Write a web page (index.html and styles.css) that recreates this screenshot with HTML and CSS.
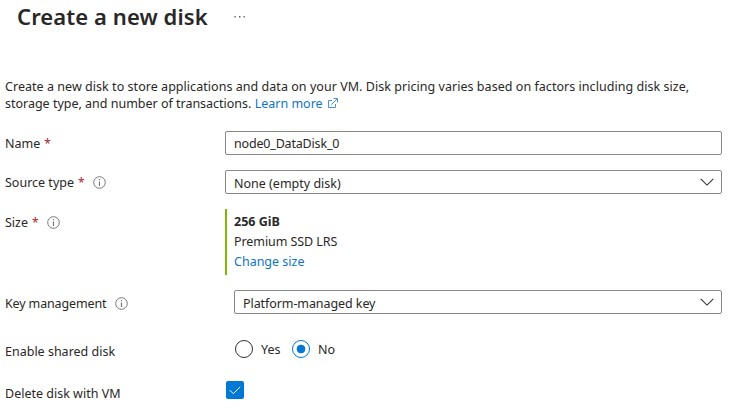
FILE: index.html
```html
<!DOCTYPE html>
<html lang="en">
<head>
<meta charset="utf-8">
<title>Create a new disk</title>
<link rel="stylesheet" href="styles.css">
</head>
<body>
<svg class="defs" width="0" height="0" aria-hidden="true">
  <symbol id="info" viewBox="0 0 13 13"><circle cx="6.5" cy="6.5" r="5.8" fill="none" stroke="#777" stroke-width="1"/><path d="M6.5 5.5V10M6.5 3V4.3" stroke="#777" stroke-width="1.2"/></symbol>
  <symbol id="chevron" viewBox="0 0 14 8"><path d="M.7 .9L7 7.1L13.3 .9" fill="none" stroke="#323130" stroke-width="1.1"/></symbol>
</svg>
<header class="header">
  <h1 class="title">Create a new disk</h1>
  <svg class="more" width="12" height="2" viewBox="0 0 12 2"><path d="M.5 0h1.3v1.5H.5zM5 0h1.5v1.5H5zM9.5 0h1.3v1.5H9.5z" fill="#605e5c"/></svg>
</header>
<main class="content">
  <p class="intro"><span class="intro-first">Create a new disk to store applications and data on your VM. Disk pricing varies based on factors including disk size,</span><br><span class="intro-second">storage type, and number of transactions.</span> <a class="link learn">Learn more</a><svg class="external" width="11" height="11" viewBox="0 0 11 11"><path d="M5 2.5H1.5V9.5H8.5V6M6.5 .5H10.5V4.5M10.2 .8L4.3 6.7" fill="none" stroke="#4a90dc" stroke-width="1"/></svg></p>
  <div class="row">
    <div class="label"><span>Name</span><span class="required">*</span></div>
    <div class="field"><span class="node-name">node0_DataDisk_0</span></div>
  </div>
  <div class="row">
    <div class="label"><span>Source type</span><span class="required">*</span><svg class="info"><use href="#info"/></svg></div>
    <div class="field select"><span>None (empty disk)</span><svg class="chevron"><use href="#chevron"/></svg></div>
  </div>
  <div class="row size-row">
    <div class="label size-label"><span>Size</span><span class="required">*</span><svg class="info"><use href="#info"/></svg></div>
    <div class="size-card"><strong>256 GiB</strong><span class="tight">Premium SSD LRS</span><a class="link">Change size</a></div>
  </div>
  <div class="row">
    <div class="label key-label"><span class="key-text">Key management</span><svg class="info"><use href="#info"/></svg></div>
    <div class="field select inset"><span class="tight">Platform-managed key</span><svg class="chevron"><use href="#chevron"/></svg></div>
  </div>
  <div class="row shared-row">
    <div class="label"><span>Enable shared disk</span></div>
    <div class="radios"><span class="radio"></span><span class="yes">Yes</span><span class="radio selected"></span><span class="no">No</span></div>
  </div>
  <div class="row delete-row">
    <div class="label"><span>Delete disk with VM</span></div>
    <span class="checkbox"><svg width="12" height="9" viewBox="0 0 12 9"><path d="M.8 4.2L4.3 7.7L11.2 .8" fill="none" stroke="#fff" stroke-width="1"/></svg></span>
  </div>
</main>
</body>
</html>
```
FILE: styles.css
```css
* { box-sizing: border-box; }
body { margin: 0; min-height: 409px; background: #fff; color: #292827; font: 12.5px/17px "Noto Sans", "Open Sans", sans-serif; }
.defs { display: block; height: 0; }
.header { height: 77px; display: flex; align-items: flex-start; padding-left: 17px; }
.title { margin: 0; font-size: 22px; line-height: 32px; font-weight: 600; width: 192px; letter-spacing: .09px; white-space: nowrap; }
.more { margin: 16px 0 0 25px; }
.content { padding: 0 9px 0 5px; }
.intro { margin: 0 0 19px; height: 35px; padding-top: 1px; white-space: nowrap; }
.intro-first { letter-spacing: .041px; }
.intro-second { letter-spacing: -.01px; }
.link { color: #0f74c8; }
.external { margin-left: 4px; vertical-align: -1px; }
.row { display: grid; grid-template-columns: 220px 1fr; height: 24px; margin-bottom: 15px; align-items: center; }
.label { display: flex; align-items: center; height: 24px; white-space: nowrap; }
.required { color: #a4262c; margin-left: 4px; font-size: 12px; }
.info { width: 13px; height: 13px; margin-left: 8.5px; }
.field { display: flex; align-items: center; height: 24px; border: 1px solid #8a8886; border-radius: 2px; padding: 0 8px; white-space: nowrap; }
.node-name { letter-spacing: -.18px; }
.tight { letter-spacing: -.08px; }
.key-text { letter-spacing: -.14px; }
.select { justify-content: space-between; padding: 2px 7px 0 8px; }
.chevron { width: 14px; height: 8px; margin-top: -2px; }
.inset { margin-left: 9px; }
.size-row { height: 66px; align-items: start; }
.size-label { padding-top: 2px; }
.key-label { padding-top: 2px; }
.size-card { height: 66px; border-left: 2px solid #7fba00; padding: 3px 0 0 7px; display: flex; flex-direction: column; align-items: flex-start; line-height: 20px; }
.shared-row { margin-top: 25px; height: 20px; margin-bottom: 22px; }
.shared-row .label { height: 20px; padding-top: 5px; }
.radios { display: flex; align-items: center; padding-left: 10px; }
.radio { width: 18px; height: 18px; border: 1px solid #323130; border-radius: 50%; }
.yes { width: 19px; margin: 0 12px 0 8px; }
.selected { border-color: #0078d4; background: radial-gradient(circle, #0078d4 4px, transparent 4.7px); }
.no { margin-left: 8px; }
.delete-row { height: 18px; margin: 0; }
.delete-row .label { height: 18px; padding-top: 7px; }
.checkbox { display: flex; align-items: center; justify-content: center; width: 18px; height: 18px; margin-left: 1px; border-radius: 2px; background: #0078d4; }
```
